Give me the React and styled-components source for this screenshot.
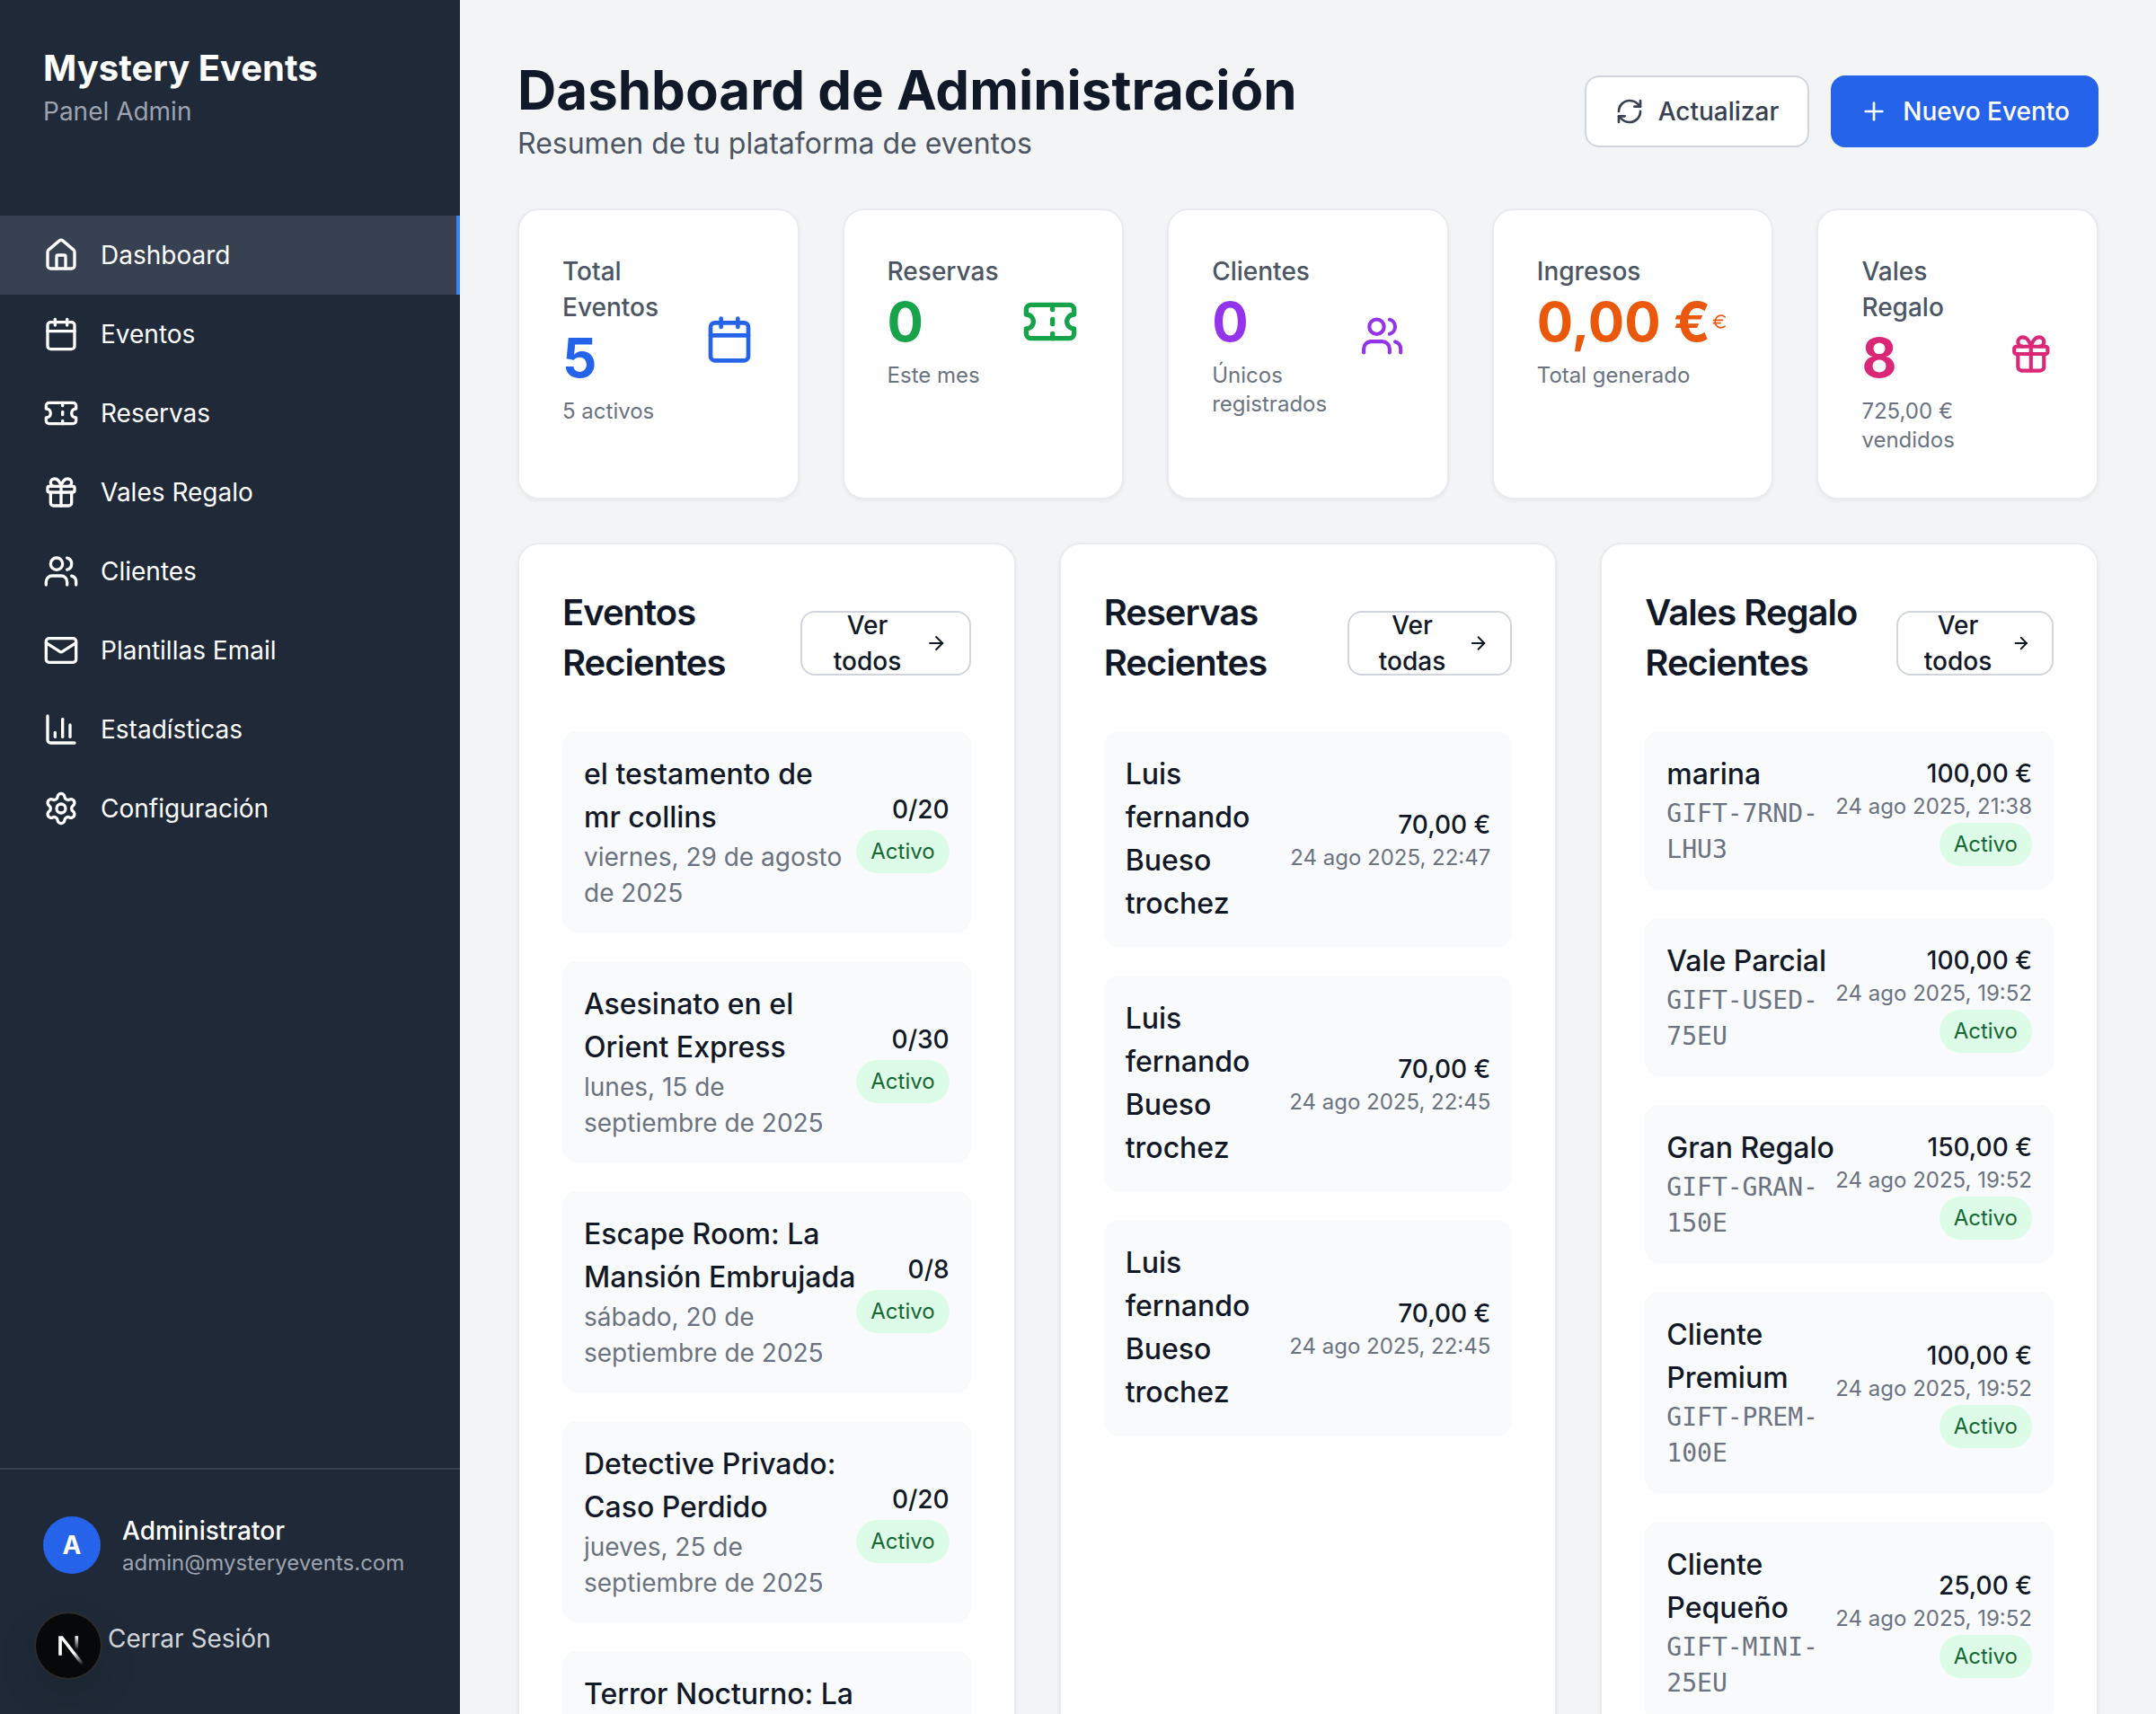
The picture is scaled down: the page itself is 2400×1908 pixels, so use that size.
import React from 'react';
import styled, { createGlobalStyle } from 'styled-components';
import {
  House, Calendar, Ticket, Gift, Users, Mail, ChartColumn, Settings,
  RefreshCw, Plus, ArrowRight, Euro, LogOut,
} from 'lucide-react';

const GlobalStyle = createGlobalStyle`
  * { box-sizing: border-box; }
  html, body { margin: 0; padding: 0; height: 100%; }
  body {
    background: #f3f4f6;
    color: #111827;
    font-family: Inter, "Noto Sans", sans-serif;
  }
`;

const Layout = styled.div`
  display: flex;
  height: 100vh;
  overflow: hidden;
`;

const Sidebar = styled.aside`
  position: relative;
  display: flex;
  flex-direction: column;
  flex: 0 0 512px;
  background: #1f2937;
  color: #fff;
`;

const Brand = styled.div`
  padding: 48px;
`;

const BrandName = styled.h1`
  margin: 0;
  font-size: 40px;
  line-height: 56px;
  font-weight: 700;
`;

const BrandSub = styled.p`
  margin: 0;
  font-size: 28px;
  line-height: 40px;
  color: #9ca3af;
`;

const Nav = styled.nav`
  margin-top: 48px;
  flex: 1;
`;

const NavItem = styled.a`
  display: flex;
  align-items: center;
  gap: 24px;
  height: 88px;
  padding: 0 48px;
  font-size: 28px;
  line-height: 40px;
  font-weight: 400;
  color: #fff;
  background: ${props => (props.$active ? '#374151' : 'transparent')};
  border-right: 4px solid ${props => (props.$active ? '#3b82f6' : 'transparent')};

  svg {
    width: 40px;
    height: 40px;
    flex-shrink: 0;
  }
`;

const SideFooter = styled.div`
  padding: 48px;
  border-top: 2px solid #374151;
`;

const UserRow = styled.div`
  display: flex;
  align-items: center;
  gap: 24px;
  margin-bottom: 32px;
`;

const Avatar = styled.div`
  display: flex;
  align-items: center;
  justify-content: center;
  width: 64px;
  height: 64px;
  border-radius: 50%;
  background: #2563eb;
  font-size: 28px;
  font-weight: 700;
`;

const UserName = styled.div`
  font-size: 28px;
  line-height: 40px;
  font-weight: 500;
`;

const UserMail = styled.div`
  font-size: 24px;
  line-height: 32px;
  color: #9ca3af;
`;

const Logout = styled.a`
  display: flex;
  align-items: center;
  gap: 24px;
  padding: 16px;
  font-size: 28px;
  line-height: 40px;
  color: #d1d5db;

  svg {
    width: 32px;
    height: 32px;
  }
`;

const DevBadge = styled.div`
  position: absolute;
  left: 40px;
  bottom: 40px;
  display: flex;
  align-items: center;
  justify-content: center;
  width: 72px;
  height: 72px;
  border-radius: 50%;
  background: #070809;
  box-shadow: 0 0 0 2px #2b2c2e, 0 16px 48px rgba(0, 0, 0, 0.12);
`;

const Main = styled.main`
  flex: 1;
  min-width: 0;
  padding: 64px;
  overflow: hidden;
`;

const Header = styled.header`
  display: flex;
  align-items: center;
  justify-content: space-between;
  margin-bottom: 48px;
`;

const Title = styled.h1`
  margin: 0;
  font-size: 60px;
  line-height: 72px;
  font-weight: 700;
  color: #111827;
`;

const Subtitle = styled.p`
  margin: 0;
  font-size: 32px;
  line-height: 48px;
  color: #4b5563;
`;

const Actions = styled.div`
  display: flex;
  gap: 24px;
`;

const Button = styled.button`
  display: flex;
  align-items: center;
  gap: 16px;
  height: 80px;
  padding: 0 32px;
  border-radius: 16px;
  border: ${props => (props.$primary ? 'none' : '2px solid #d1d5db')};
  background: ${props => (props.$primary ? '#2563eb' : '#fff')};
  color: ${props => (props.$primary ? '#fff' : '#374151')};
  font-family: inherit;
  font-size: 28px;
  line-height: 40px;
  font-weight: 500;

  svg {
    width: 32px;
    height: 32px;
  }
`;

const StatGrid = styled.section`
  display: grid;
  grid-template-columns: repeat(5, minmax(0, 1fr));
  gap: 48px;
  margin-bottom: 48px;
`;

const Card = styled.div`
  background: #fff;
  border: 2px solid #e9ebee;
  border-radius: 24px;
  box-shadow: 0 2px 4px rgba(0, 0, 0, 0.05);
`;

const StatCard = styled(Card)`
  padding: 48px;
`;

const StatBody = styled.div`
  display: flex;
  align-items: center;
  justify-content: space-between;

  svg {
    width: 64px;
    height: 64px;
    color: ${props => props.$color};
  }
`;

const StatLabel = styled.p`
  margin: 0;
  font-size: 28px;
  line-height: 40px;
  font-weight: 500;
  color: #4b5563;
`;

const StatValue = styled.p`
  margin: 0;
  font-size: 60px;
  line-height: 72px;
  font-weight: 700;
  color: ${props => props.$color};
`;

const StatNote = styled.p`
  margin: 8px 0 0;
  font-size: 24px;
  line-height: 32px;
  color: #6b7280;
`;

const PanelGrid = styled.section`
  display: grid;
  grid-template-columns: repeat(3, minmax(0, 1fr));
  gap: 48px;
`;

const Panel = styled(Card)`
  padding: 48px;
`;

const PanelHead = styled.div`
  display: flex;
  align-items: center;
  justify-content: space-between;
  margin-bottom: 48px;
`;

const PanelTitle = styled.h2`
  margin: 0;
  font-size: 40px;
  line-height: 56px;
  font-weight: 600;
  letter-spacing: -1px;
  color: #111827;
`;

const SeeAll = styled.button`
  display: flex;
  align-items: center;
  gap: 16px;
  height: 72px;
  margin-top: 12px;
  padding: 0 24px;
  border: 2px solid #d1d5db;
  border-radius: 16px;
  background: #fff;
  color: #111827;
  font-family: inherit;
  font-size: 28px;
  line-height: 40px;
  font-weight: 500;

  svg {
    width: 32px;
    height: 32px;
  }
`;

const List = styled.div`
  display: flex;
  flex-direction: column;
  gap: 32px;
`;

const Item = styled.div`
  display: flex;
  align-items: center;
  justify-content: space-between;
  padding: 24px;
  border-radius: 16px;
  background: #f9fafb;
`;

const ItemMain = styled.div`
  flex: 1;
  min-width: 0;
`;

const ItemName = styled.p`
  margin: 0;
  font-size: 32px;
  line-height: 48px;
  font-weight: 500;
  color: #111827;
`;

const ItemDate = styled.p`
  margin: 0;
  font-size: 28px;
  line-height: 40px;
  color: #6b7280;
`;

const ItemCode = styled.p`
  margin: 0;
  font-family: "DejaVu Sans Mono", "Liberation Mono", monospace;
  font-size: 28px;
  line-height: 40px;
  color: #6b7280;
`;

const ItemSide = styled.div`
  display: flex;
  flex-direction: column;
  align-items: flex-end;
  flex-shrink: 0;
  text-align: right;
`;

const ItemValue = styled.p`
  margin: 0;
  font-size: 28px;
  line-height: 42px;
  font-weight: 500;
  color: #111827;
  white-space: nowrap;
`;

const ItemTime = styled.p`
  margin: 0;
  font-size: 24px;
  line-height: 32px;
  color: #6b7280;
  white-space: nowrap;
`;

const Pill = styled.span`
  display: inline-flex;
  align-items: center;
  height: 48px;
  margin-top: 2px;
  padding: 0 16px;
  border-radius: 999px;
  background: #dcfce7;
  color: #166534;
  font-size: 24px;
  line-height: 32px;
`;

const navItems = [
  { label: 'Dashboard', icon: House, active: true },
  { label: 'Eventos', icon: Calendar },
  { label: 'Reservas', icon: Ticket },
  { label: 'Vales Regalo', icon: Gift },
  { label: 'Clientes', icon: Users },
  { label: 'Plantillas Email', icon: Mail },
  { label: 'Estadísticas', icon: ChartColumn },
  { label: 'Configuración', icon: Settings },
];

const stats = [
  { label: 'Total Eventos', value: '5', note: '5 activos', color: '#2563eb', icon: Calendar },
  { label: 'Reservas', value: '0', note: 'Este mes', color: '#16a34a', icon: Ticket },
  { label: 'Clientes', value: '0', note: 'Únicos registrados', color: '#9333ea', icon: Users },
  { label: 'Ingresos', value: '0,00\u00a0€', note: 'Total generado', color: '#ea580c', icon: Euro },
  { label: 'Vales Regalo', value: '8', note: '725,00 € vendidos', color: '#db2777', icon: Gift },
];

const events = [
  { name: 'el testamento de mr collins', date: 'viernes, 29 de agosto de 2025', count: '0/20' },
  { name: 'Asesinato en el Orient Express', date: 'lunes, 15 de septiembre de 2025', count: '0/30' },
  { name: 'Escape Room: La Mansión Embrujada', date: 'sábado, 20 de septiembre de 2025', count: '0/8' },
  { name: 'Detective Privado: Caso Perdido', date: 'jueves, 25 de septiembre de 2025', count: '0/20' },
  { name: 'Terror Nocturno: La Cabaña', date: 'domingo, 28 de septiembre de 2025', count: '0/15' },
];

const bookings = [
  { name: 'Luis fernando Bueso trochez', amount: '70,00 €', time: '24 ago 2025, 22:47' },
  { name: 'Luis fernando Bueso trochez', amount: '70,00 €', time: '24 ago 2025, 22:45' },
  { name: 'Luis fernando Bueso trochez', amount: '70,00 €', time: '24 ago 2025, 22:45' },
];

const vouchers = [
  { name: 'marina', code: 'GIFT-7RND-LHU3', amount: '100,00 €', time: '24 ago 2025, 21:38' },
  { name: 'Vale Parcial', code: 'GIFT-USED-75EU', amount: '100,00 €', time: '24 ago 2025, 19:52' },
  { name: 'Gran Regalo', code: 'GIFT-GRAN-150E', amount: '150,00 €', time: '24 ago 2025, 19:52' },
  { name: 'Cliente Premium', code: 'GIFT-PREM-100E', amount: '100,00 €', time: '24 ago 2025, 19:52' },
  { name: 'Cliente Pequeño', code: 'GIFT-MINI-25EU', amount: '25,00 €', time: '24 ago 2025, 19:52' },
];

const NextMark = () => (
  <svg width="54" height="54" viewBox="0 0 180 180" fill="none">
    <defs>
      <linearGradient id="nextDiag" x1="109" y1="116.5" x2="144.5" y2="160.5" gradientUnits="userSpaceOnUse">
        <stop stopColor="#fff" />
        <stop offset="1" stopColor="#fff" stopOpacity="0" />
      </linearGradient>
      <linearGradient id="nextBar" x1="121" y1="54" x2="120.8" y2="106" gradientUnits="userSpaceOnUse">
        <stop stopColor="#fff" />
        <stop offset="1" stopColor="#fff" stopOpacity="0" />
      </linearGradient>
    </defs>
    <path d="M149.508 157.52L69.142 54H54V125.97H66.1136V69.3836L139.999 164.845C143.333 162.614 146.509 160.165 149.508 157.52Z" fill="url(#nextDiag)" />
    <rect x="115" y="54" width="12" height="72" fill="url(#nextBar)" />
  </svg>
);

const PanelHeader = ({ title, action }) => (
  <PanelHead>
    <PanelTitle>{title}</PanelTitle>
    <SeeAll>
      <span>{action}</span>
      <ArrowRight />
    </SeeAll>
  </PanelHead>
);

const App = () => (
  <Layout>
    <GlobalStyle />
    <Sidebar>
      <Brand>
        <BrandName>Mystery Events</BrandName>
        <BrandSub>Panel Admin</BrandSub>
      </Brand>
      <Nav>
        {navItems.map(({ label, icon: Icon, active }) => (
          <NavItem key={label} $active={active}>
            <Icon />
            {label}
          </NavItem>
        ))}
      </Nav>
      <SideFooter>
        <UserRow>
          <Avatar>A</Avatar>
          <div>
            <UserName>Administrator</UserName>
            <UserMail>admin@mysteryevents.com</UserMail>
          </div>
        </UserRow>
        <Logout>
          <LogOut />
          Cerrar Sesión
        </Logout>
      </SideFooter>
      <DevBadge>
        <NextMark />
      </DevBadge>
    </Sidebar>
    <Main>
      <Header>
        <div>
          <Title>Dashboard de Administración</Title>
          <Subtitle>Resumen de tu plataforma de eventos</Subtitle>
        </div>
        <Actions>
          <Button>
            <RefreshCw />
            Actualizar
          </Button>
          <Button $primary>
            <Plus />
            Nuevo Evento
          </Button>
        </Actions>
      </Header>
      <StatGrid>
        {stats.map(({ label, value, note, color, icon: Icon }) => (
          <StatCard key={label}>
            <StatBody $color={color}>
              <div>
                <StatLabel>{label}</StatLabel>
                <StatValue $color={color}>{value}</StatValue>
                <StatNote>{note}</StatNote>
              </div>
              <Icon />
            </StatBody>
          </StatCard>
        ))}
      </StatGrid>
      <PanelGrid>
        <Panel>
          <PanelHeader title="Eventos Recientes" action="Ver todos" />
          <List>
            {events.map(event => (
              <Item key={event.name}>
                <ItemMain>
                  <ItemName>{event.name}</ItemName>
                  <ItemDate>{event.date}</ItemDate>
                </ItemMain>
                <ItemSide>
                  <ItemValue>{event.count}</ItemValue>
                  <Pill>Activo</Pill>
                </ItemSide>
              </Item>
            ))}
          </List>
        </Panel>
        <Panel>
          <PanelHeader title="Reservas Recientes" action="Ver todas" />
          <List>
            {bookings.map((booking, index) => (
              <Item key={index}>
                <ItemMain>
                  <ItemName>{booking.name}</ItemName>
                </ItemMain>
                <ItemSide>
                  <ItemValue>{booking.amount}</ItemValue>
                  <ItemTime>{booking.time}</ItemTime>
                </ItemSide>
              </Item>
            ))}
          </List>
        </Panel>
        <Panel>
          <PanelHeader title="Vales Regalo Recientes" action="Ver todos" />
          <List>
            {vouchers.map(voucher => (
              <Item key={voucher.code}>
                <ItemMain>
                  <ItemName>{voucher.name}</ItemName>
                  <ItemCode>{voucher.code}</ItemCode>
                </ItemMain>
                <ItemSide>
                  <ItemValue>{voucher.amount}</ItemValue>
                  <ItemTime>{voucher.time}</ItemTime>
                  <Pill>Activo</Pill>
                </ItemSide>
              </Item>
            ))}
          </List>
        </Panel>
      </PanelGrid>
    </Main>
  </Layout>
);

export default App;
